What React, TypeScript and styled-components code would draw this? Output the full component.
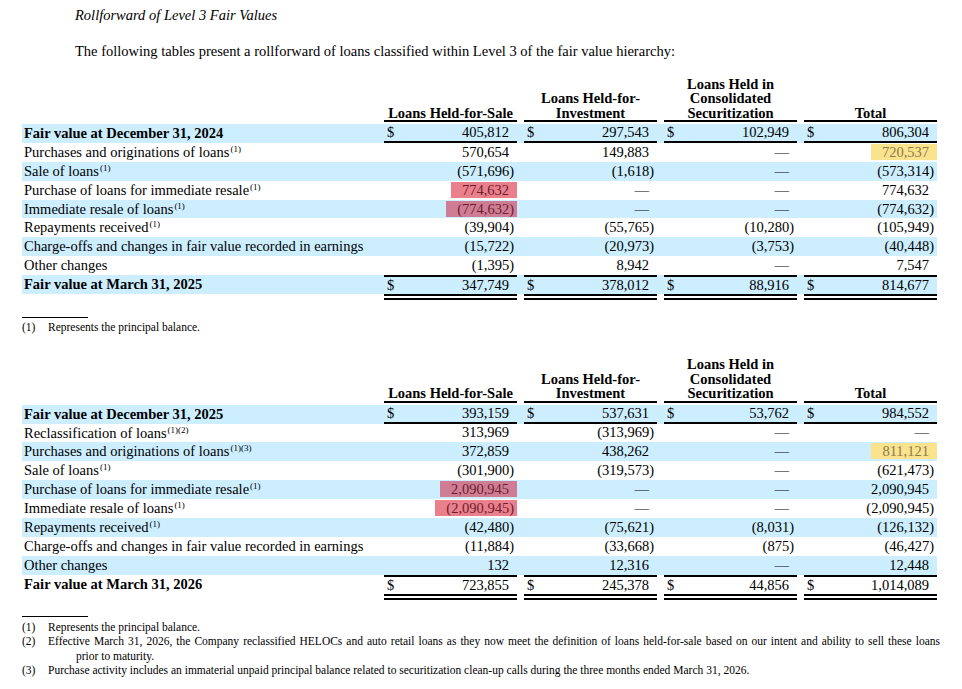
import React from "react";
import styled, { createGlobalStyle, css } from "styled-components";

type Tone = "red" | "yellow";
type Cell = string | { v: string; mark: Tone };
type Line = {
  label: string;
  notes?: string;
  cells: Cell[];
  kind?: "opening" | "closing";
};

const BLUE = "#cceeff";

const GlobalStyle = createGlobalStyle`
  html, body {
    margin: 0;
    background: #fff;
  }
  body {
    font-family: "Liberation Serif", "Times New Roman", serif;
    color: #000;
  }
`;

const Page = styled.div`
  width: 962px;
  height: 689px;
  overflow: hidden;
  box-sizing: border-box;
  padding: 6.5px 0 0 22px;
`;

const Title = styled.p`
  margin: 0 0 0 53px;
  font-size: 14.5px;
  line-height: 17px;
  font-style: italic;
`;

const Intro = styled.p`
  margin: 19px 0 0 53px;
  font-size: 14.5px;
  line-height: 17px;
`;

const grid = css`
  display: grid;
  grid-template-columns: 355px repeat(4, 133px);
  column-gap: 7px;
  width: 915px;
`;

const Block = styled.section<{ $top: number }>`
  margin-top: ${(p) => p.$top}px;
  font-size: 14.5px;
`;

const HeadRow = styled.div`
  ${grid};
  align-items: end;
  margin-bottom: 2px;
`;

const HeadCell = styled.div`
  font-weight: bold;
  text-align: center;
  line-height: 14.5px;
  border-bottom: 2px solid #000;
`;

const Row = styled.div<{ $shaded: boolean }>`
  ${grid};
  height: 18.9px;
  background: ${(p) => (p.$shaded ? BLUE : "transparent")};
`;

const Label = styled.div<{ $bold: boolean }>`
  padding-left: 2px;
  line-height: 18.9px;
  white-space: nowrap;
  font-weight: ${(p) => (p.$bold ? "bold" : "normal")};
`;

const Sup = styled.sup`
  font-size: 9px;
  line-height: 0;
  vertical-align: 5px;
  margin-left: 1px;
`;

const Amount = styled.div<{ $rule?: "top" | "bottom" }>`
  display: flex;
  align-items: center;
  justify-content: space-between;
  box-sizing: border-box;
  padding: 0 8px 0 3px;
  white-space: nowrap;
  ${(p) => p.$rule === "top" && "border-top: 2px solid #000;"}
  ${(p) => p.$rule === "bottom" && "border-bottom: 2px solid #000;"}
`;

const Figure = styled.span`
  margin-left: auto;
`;

const Paren = styled.span`
  display: inline-block;
  margin-right: -5px;
`;

const Mark = styled.span<{ $tone: Tone; $onShade: boolean }>`
  display: inline-block;
  line-height: 16px;
  padding: 0 8px 0 11px;
  margin: 0 -8px 0 -11px;
  background: ${(p) =>
    p.$tone === "yellow" ? "#fbe28d" : p.$onShade ? "#cf7d95" : "#ea808c"};
  color: ${(p) => (p.$tone === "yellow" ? "#8a7b4f" : "#6e1d2e")};
`;

const DoubleRow = styled.div`
  ${grid};
`;

const DoubleRule = styled.div`
  height: 6px;
  box-sizing: border-box;
  border-top: 2px solid #000;
  border-bottom: 2px solid #000;
`;

const NoteRule = styled.div<{ $top: number }>`
  width: 66px;
  margin-top: ${(p) => p.$top}px;
  border-top: 1px solid #000;
`;

const Notes = styled.ol<{ $top: number }>`
  list-style: none;
  margin: ${(p) => p.$top}px 0 0;
  padding: 0;
  font-size: 11.5px;
  line-height: 14.6px;
`;

const Note = styled.li`
  display: grid;
  grid-template-columns: 26px auto;
`;

const Justified = styled.span`
  display: block;
  width: 892px;
  text-align: justify;
  text-align-last: justify;
`;

const Continued = styled.span`
  display: block;
  padding-left: 28px;
`;

const money = (value: string) => {
  if (value.startsWith("(")) {
    return (
      <>
        {value.slice(0, -1)}
        <Paren>)</Paren>
      </>
    );
  }
  return value;
};

const AmountCell = ({
  cell,
  dollar,
  rule,
  shaded,
}: {
  cell: Cell;
  dollar: boolean;
  rule?: "top" | "bottom";
  shaded: boolean;
}) => {
  const value = typeof cell === "string" ? cell : cell.v;
  return (
    <Amount $rule={rule}>
      {dollar && <span>$</span>}
      <Figure>
        {typeof cell === "string" ? (
          money(value)
        ) : (
          <Mark $tone={cell.mark} $onShade={shaded}>
            {money(value)}
          </Mark>
        )}
      </Figure>
    </Amount>
  );
};

const HEADERS: React.ReactNode[] = [
  "Loans Held-for-Sale",
  <>
    Loans Held-for-
    <br />
    Investment
  </>,
  <>
    Loans Held in
    <br />
    Consolidated
    <br />
    Securitization
  </>,
  "Total",
];

const Rollforward = ({ lines, top }: { lines: Line[]; top: number }) => (
  <Block $top={top}>
    <HeadRow>
      <div />
      {HEADERS.map((h, i) => (
        <HeadCell key={i}>{h}</HeadCell>
      ))}
    </HeadRow>
    {lines.map((line, i) => {
      const shaded = i % 2 === 0;
      const rule =
        line.kind === "opening" ? "bottom" : line.kind === "closing" ? "top" : undefined;
      return (
        <Row key={line.label} $shaded={shaded}>
          <Label $bold={!!line.kind}>
            {line.label}
            {line.notes && <Sup>{line.notes}</Sup>}
          </Label>
          {line.cells.map((c, j) => (
            <AmountCell key={j} cell={c} dollar={!!line.kind} rule={rule} shaded={shaded} />
          ))}
        </Row>
      );
    })}
    <DoubleRow>
      <div />
      <DoubleRule />
      <DoubleRule />
      <DoubleRule />
      <DoubleRule />
    </DoubleRow>
  </Block>
);

const FIRST: Line[] = [
  { label: "Fair value at December 31, 2024", kind: "opening", cells: ["405,812", "297,543", "102,949", "806,304"] },
  { label: "Purchases and originations of loans", notes: "(1)", cells: ["570,654", "149,883", "—", { v: "720,537", mark: "yellow" }] },
  { label: "Sale of loans", notes: "(1)", cells: ["(571,696)", "(1,618)", "—", "(573,314)"] },
  { label: "Purchase of loans for immediate resale", notes: "(1)", cells: [{ v: "774,632", mark: "red" }, "—", "—", "774,632"] },
  { label: "Immediate resale of loans", notes: "(1)", cells: [{ v: "(774,632)", mark: "red" }, "—", "—", "(774,632)"] },
  { label: "Repayments received", notes: "(1)", cells: ["(39,904)", "(55,765)", "(10,280)", "(105,949)"] },
  { label: "Charge-offs and changes in fair value recorded in earnings", cells: ["(15,722)", "(20,973)", "(3,753)", "(40,448)"] },
  { label: "Other changes", cells: ["(1,395)", "8,942", "—", "7,547"] },
  { label: "Fair value at March 31, 2025", kind: "closing", cells: ["347,749", "378,012", "88,916", "814,677"] },
];

const SECOND: Line[] = [
  { label: "Fair value at December 31, 2025", kind: "opening", cells: ["393,159", "537,631", "53,762", "984,552"] },
  { label: "Reclassification of loans", notes: "(1)(2)", cells: ["313,969", "(313,969)", "—", "—"] },
  { label: "Purchases and originations of loans", notes: "(1)(3)", cells: ["372,859", "438,262", "—", { v: "811,121", mark: "yellow" }] },
  { label: "Sale of loans", notes: "(1)", cells: ["(301,900)", "(319,573)", "—", "(621,473)"] },
  { label: "Purchase of loans for immediate resale", notes: "(1)", cells: [{ v: "2,090,945", mark: "red" }, "—", "—", "2,090,945"] },
  { label: "Immediate resale of loans", notes: "(1)", cells: [{ v: "(2,090,945)", mark: "red" }, "—", "—", "(2,090,945)"] },
  { label: "Repayments received", notes: "(1)", cells: ["(42,480)", "(75,621)", "(8,031)", "(126,132)"] },
  { label: "Charge-offs and changes in fair value recorded in earnings", cells: ["(11,884)", "(33,668)", "(875)", "(46,427)"] },
  { label: "Other changes", cells: ["132", "12,316", "—", "12,448"] },
  { label: "Fair value at March 31, 2026", kind: "closing", cells: ["723,855", "245,378", "44,856", "1,014,089"] },
];

export default function App() {
  return (
    <Page>
      <GlobalStyle />
      <Title>Rollforward of Level 3 Fair Values</Title>
      <Intro>
        The following tables present a rollforward of loans classified within Level 3 of the fair
        value hierarchy:
      </Intro>

      <Rollforward lines={FIRST} top={17} />
      <NoteRule $top={17} />
      <Notes $top={1.5}>
        <Note>
          <span>(1)</span>
          <span>Represents the principal balance.</span>
        </Note>
      </Notes>

      <Rollforward lines={SECOND} top={23} />
      <NoteRule $top={16} />
      <Notes $top={3}>
        <Note>
          <span>(1)</span>
          <span>Represents the principal balance.</span>
        </Note>
        <Note>
          <span>(2)</span>
          <span>
            <Justified>
              Effective March 31, 2026, the Company reclassified HELOCs and auto retail loans as they
              now meet the definition of loans held-for-sale based on our intent and ability to sell
              these loans
            </Justified>
            <Continued>prior to maturity.</Continued>
          </span>
        </Note>
        <Note>
          <span>(3)</span>
          <span>
            Purchase activity includes an immaterial unpaid principal balance related to
            securitization clean-up calls during the three months ended March 31, 2026.
          </span>
        </Note>
      </Notes>
    </Page>
  );
}
